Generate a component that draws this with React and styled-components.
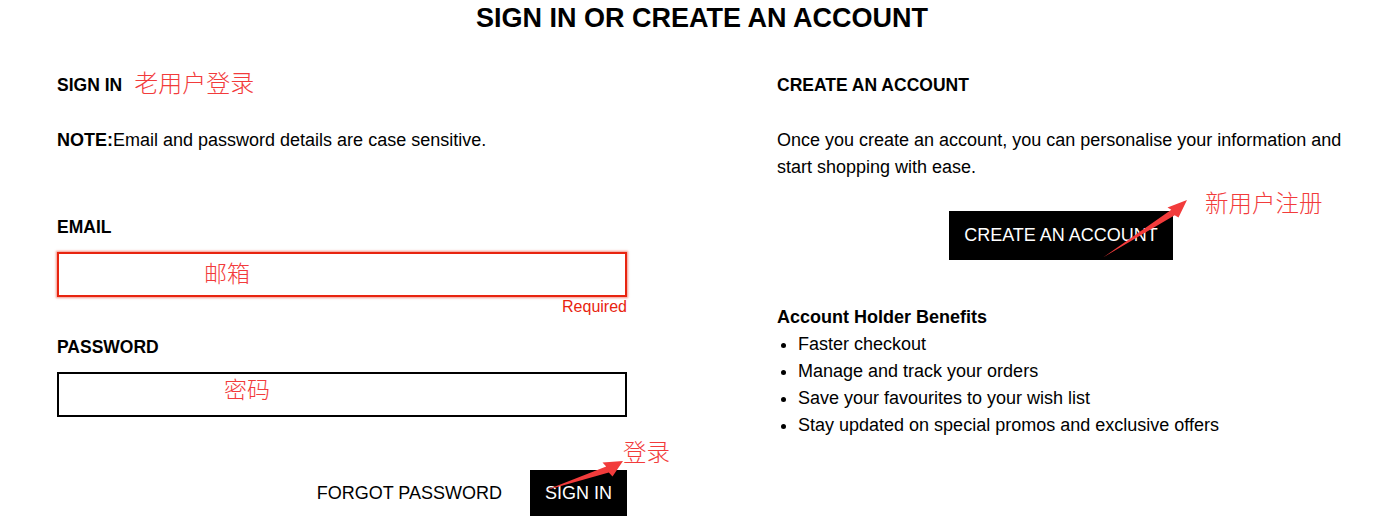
import React from 'react';
import styled, { createGlobalStyle } from 'styled-components';

const GlobalStyle = createGlobalStyle`
  body {
    margin: 0;
    background: #fff;
    color: #000;
    font-family: 'Liberation Sans', Arial, sans-serif;
  }
`;

const NOTE_RED = '#f23b3b';
const CJK = `'Noto Sans CJK SC', 'Liberation Sans', sans-serif`;

export const Page = styled.main`
  position: relative;
  width: 1387px;
  height: 531px;
  overflow: hidden;
`;

export const Title = styled.h1`
  margin: 0;
  font-size: 27px;
  line-height: 36px;
  font-weight: 700;
  text-align: center;
  padding-left: 17px;
`;

export const Columns = styled.div`
  display: grid;
  grid-template-columns: 570px 568px;
  column-gap: 150px;
  padding-left: 57px;
  margin-top: 37px;
`;

export const Column = styled.section`
  display: flex;
  flex-direction: column;
`;

export const Heading = styled.h2`
  margin: 0;
  font-size: 17.5px;
  line-height: 24px;
  font-weight: 700;
  display: flex;
  align-items: center;
`;

export const Note = styled.span`
  font-family: ${CJK};
  font-size: 24px;
  font-weight: 300;
  color: ${NOTE_RED};
  margin-left: ${(p) => p.$gap || 0}px;
  line-height: 24px;
  position: relative;
  top: -3px;
`;

export const Text = styled.p`
  margin: ${(p) => p.$top || 0}px 0 0;
  font-size: 18px;
  line-height: 27px;
`;

export const Label = styled.label`
  display: block;
  margin-top: ${(p) => p.$top}px;
  font-size: 17.5px;
  line-height: 24px;
  font-weight: 700;
`;

export const Input = styled.input`
  box-sizing: border-box;
  display: block;
  width: 570px;
  height: 45px;
  margin-top: 13px;
  padding: 0 0 ${(p) => p.$lift || 0}px ${(p) => p.$indent}px;
  border: 2px solid ${(p) => (p.$error ? '#e8240f' : '#000')};
  box-shadow: ${(p) => (p.$error ? '0 0 2px 1px rgba(232, 60, 40, 0.55)' : 'none')};
  outline: none;
  background: #fff;
  font-family: ${CJK};
  font-size: 23px;
  font-weight: 300;
  &::placeholder {
    color: ${NOTE_RED};
    opacity: 1;
  }
`;

export const ErrorText = styled.div`
  text-align: right;
  color: #e8240f;
  font-size: 16px;
  line-height: 20px;
`;

export const Actions = styled.div`
  display: flex;
  justify-content: flex-end;
  align-items: center;
  gap: 28px;
  margin-top: 53px;
`;

export const TextLink = styled.a`
  font-size: 18px;
  color: #000;
  text-decoration: none;
  line-height: 46px;
`;

export const Button = styled.button`
  height: ${(p) => p.$h}px;
  padding: 0 ${(p) => p.$pad}px;
  border: none;
  background: #000;
  color: #fff;
  font-family: 'Liberation Sans', Arial, sans-serif;
  font-size: 18px;
  cursor: pointer;
`;

export const Centered = styled.div`
  display: flex;
  justify-content: center;
  margin-top: 30px;
`;

export const SubHeading = styled.h3`
  margin: 44px 0 0;
  font-size: 18px;
  line-height: 27px;
  font-weight: 700;
`;

export const Benefits = styled.ul`
  margin: 0;
  padding-left: 21px;
  font-size: 18px;
  line-height: 27px;
`;

export const FloatNote = styled.span`
  position: absolute;
  left: ${(p) => p.$x}px;
  top: ${(p) => p.$y}px;
  font-family: ${CJK};
  font-size: 23.5px;
  font-weight: 300;
  line-height: 26px;
  color: ${NOTE_RED};
`;

export const Overlay = styled.svg`
  position: absolute;
  inset: 0;
  pointer-events: none;
`;

const benefits = [
  'Faster checkout',
  'Manage and track your orders',
  'Save your favourites to your wish list',
  'Stay updated on special promos and exclusive offers',
];

export default function App() {
  return (
    <Page>
      <GlobalStyle />
      <Title>SIGN IN OR CREATE AN ACCOUNT</Title>
      <Columns>
        <Column>
          <Heading>
            SIGN IN<Note $gap={12}>老用户登录</Note>
          </Heading>
          <Text $top={30}>
            <b>NOTE:</b>Email and password details are case sensitive.
          </Text>
          <Label $top={61}>EMAIL</Label>
          <Input $error $indent={145} $lift={5} placeholder="邮箱" />
          <ErrorText>Required</ErrorText>
          <Label $top={18}>PASSWORD</Label>
          <Input type="password" $indent={165} $lift={14} placeholder="密码" />
          <Actions>
            <TextLink href="#">FORGOT PASSWORD</TextLink>
            <Button $h={46} $pad={15}>SIGN IN</Button>
          </Actions>
        </Column>
        <Column>
          <Heading>CREATE AN ACCOUNT</Heading>
          <Text $top={30}>
            Once you create an account, you can personalise your information and start shopping
            with ease.
          </Text>
          <Centered>
            <Button $h={49} $pad={15}>CREATE AN ACCOUNT</Button>
          </Centered>
          <SubHeading>Account Holder Benefits</SubHeading>
          <Benefits>
            {benefits.map((b) => (
              <li key={b}>{b}</li>
            ))}
          </Benefits>
        </Column>
      </Columns>

      <FloatNote $x={623} $y={438}>登录</FloatNote>
      <FloatNote $x={1205} $y={189}>新用户注册</FloatNote>
      <Overlay width="1387" height="531">
        <polygon
          fill={NOTE_RED}
          points="545,490.5 606.2,466.4 602.5,462.5 623,461 612.5,476.5 608.8,472.6"
        />
        <polygon
          fill={NOTE_RED}
          points="1103,257.5 1171.3,209.8 1167.5,207.5 1187,200 1178.5,217.5 1174.7,215.2"
        />
      </Overlay>
    </Page>
  );
}
